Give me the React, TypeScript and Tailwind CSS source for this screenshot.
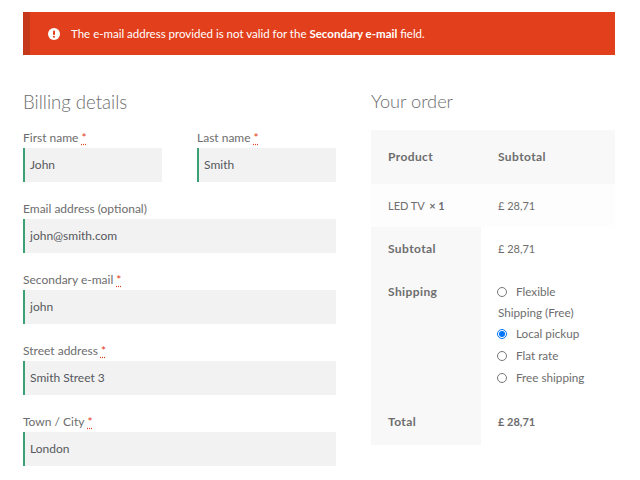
const Req = () => (
  <span className="text-[#e2401c] underline decoration-dotted underline-offset-2 ml-[3px]">*</span>
);

function Field({ label, value, req, className = "" }: { label: string; value: string; req?: boolean; className?: string }) {
  return (
    <div className={className}>
      <div className="h-[20px] text-[12px] leading-[20px] text-[#6d6d6d] whitespace-nowrap">
        {label}
        {req && <Req />}
      </div>
      <div className="h-[34px] bg-[#f2f2f2] border-l-2 border-[#3ba073] pl-[5px] text-[12px] leading-[34px] text-[#56585d] whitespace-nowrap">
        {value}
      </div>
    </div>
  );
}

function Radio({ on }: { on?: boolean }) {
  return on ? (
    <span className="w-[10px] h-[10px] rounded-full border border-[#0075ff] flex items-center justify-center shrink-0">
      <span className="w-[6px] h-[6px] rounded-full bg-[#0075ff]" />
    </span>
  ) : (
    <span className="w-[10px] h-[10px] rounded-full border border-[#767676] bg-white shrink-0" />
  );
}

function Option({ label, on, className = "" }: { label: string; on?: boolean; className?: string }) {
  return (
    <div className={`flex items-center gap-[9px] h-[22px] -ml-[1px] ${className}`}>
      <Radio on={on} />
      <span>{label}</span>
    </div>
  );
}

export default function App() {
  return (
    <div className="w-[640px] h-[480px] overflow-hidden bg-white pt-[12px] pl-[23px] pr-[25px] font-['Lato','Noto_Sans',sans-serif] text-[#6d6d6d]">
      <div className="h-[43px] bg-[#e2401c] border-l-[7px] border-[#c5391a] flex items-center pl-[18px] text-white text-[11.5px] whitespace-nowrap">
        <svg viewBox="0 0 12 12" className="w-[12px] h-[12px] mr-[11px] shrink-0">
          <circle cx="6" cy="6" r="6" fill="#fff" />
          <rect x="5" y="2.4" width="2" height="4.6" rx="0.8" fill="#e2401c" />
          <circle cx="6" cy="8.8" r="1.05" fill="#e2401c" />
        </svg>
        <span>
          The e-mail address provided is not valid for the <b className="font-bold">Secondary e-mail</b> field.
        </span>
      </div>

      <div className="flex gap-[35px] mt-[33px]">
        <div className="w-[313px]">
          <h3 className="h-[28px] text-[18.6px] leading-[28px] font-light text-[#6d6d6d]">Billing details</h3>
          <div className="flex gap-[35px] mt-[12px]">
            <Field className="w-[139px]" label="First name" value="John" req />
            <Field className="w-[139px]" label="Last name" value="Smith" req />
          </div>
          <Field className="mt-[17px]" label="Email address (optional)" value="john@smith.com" />
          <Field className="mt-[17px]" label="Secondary e-mail" value="john" req />
          <Field className="mt-[17px]" label="Street address" value="Smith Street 3" req />
          <Field className="mt-[17px]" label="Town / City" value="London" req />
        </div>

        <div className="w-[244px]">
          <h3 className="h-[27px] text-[18.2px] leading-[27px] font-light text-[#6d6d6d]">Your order</h3>
          <div className="mt-[15px] text-[11.7px]">
            <div className="h-[54px] bg-[#f8f8f8] flex items-center font-bold text-[12px] tracking-[0.4px]">
              <div className="w-[127px] pl-[17px]">Product</div>
              <div>Subtotal</div>
            </div>
            <div className="h-[43px] bg-[#fdfdfd] flex items-center text-[11px] pt-[1px]">
              <div className="w-[127px] pl-[17px]">
                LED TV <b className="font-bold ml-[2px]">× 1</b>
              </div>
              <div>£ 28,71</div>
            </div>
            <div className="flex">
              <div className="w-[110px] bg-[#f8f8f8] pl-[17px] font-bold text-[12px] tracking-[0.4px]">
                <div className="h-[44px] leading-[44px]">Subtotal</div>
                <div className="h-[129px] leading-[42px]">Shipping</div>
                <div className="h-[45px] leading-[44px]">Total</div>
              </div>
              <div className="pl-[17px] flex-1">
                <div className="h-[44px] leading-[44px] text-[11px]">£ 28,71</div>
                <div className="h-[129px] pt-[10px]">
                  <Option label="Flexible" />
                  <div className="h-[19px] leading-[19px]">Shipping (Free)</div>
                  <Option label="Local pickup" on className="mt-[1px]" />
                  <Option label="Flat rate" />
                  <Option label="Free shipping" />
                </div>
                <div className="h-[45px] leading-[44px] font-bold text-[11px]">£ 28,71</div>
              </div>
            </div>
          </div>
        </div>
      </div>
    </div>
  );
}
